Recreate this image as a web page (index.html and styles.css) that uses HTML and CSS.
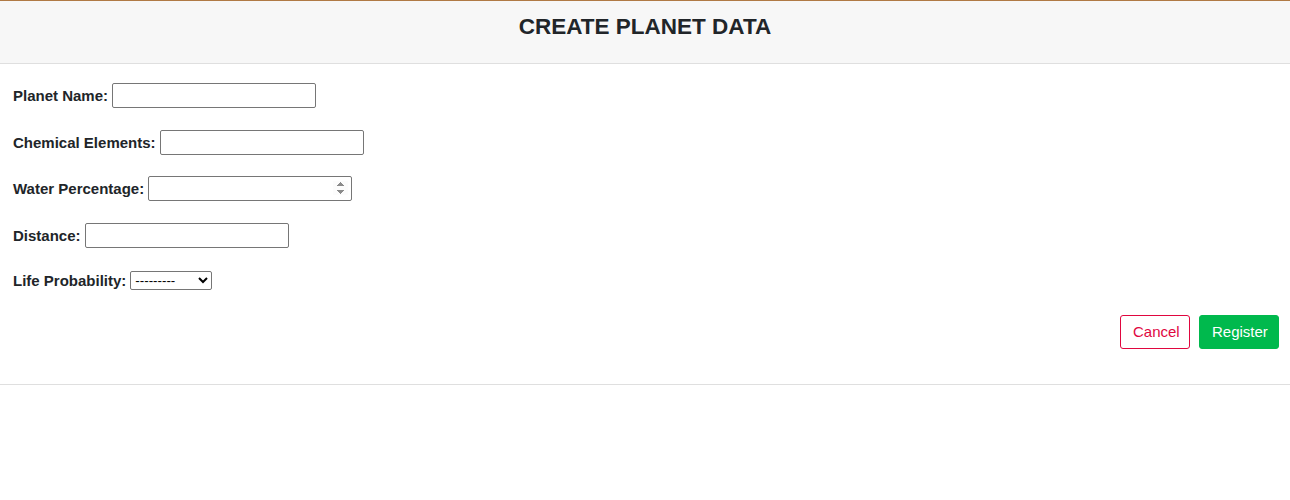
FILE: index.html
```html
<!DOCTYPE html>
<html lang="en">
<head>
<meta charset="utf-8">
<title>Create Planet Data</title>
<link rel="stylesheet" href="styles.css">
</head>
<body>
<div class="card">
  <div class="card-header">
    <h5 class="card-title">CREATE PLANET DATA</h5>
  </div>
  <form class="card-body">
    <div class="field field-first">
      <label for="name">Planet Name:</label>
      <input class="text-input" type="text" id="name">
    </div>
    <div class="field">
      <label for="elements">Chemical Elements:</label>
      <input class="text-input" type="text" id="elements">
    </div>
    <div class="field">
      <label for="water">Water Percentage:</label>
      <input class="text-input number-input" type="number" id="water">
    </div>
    <div class="field">
      <label for="distance">Distance:</label>
      <input class="text-input" type="text" id="distance">
    </div>
    <div class="field field-select">
      <label for="life">Life Probability:</label>
      <select class="select-input" id="life">
        <option>---------</option>
        <option>Low</option>
        <option>Medium</option>
        <option>High</option>
      </select>
    </div>
    <div class="actions">
      <button type="button" class="btn btn-cancel">Cancel</button>
      <button type="submit" class="btn btn-register">Register</button>
    </div>
  </form>
</div>
</body>
</html>
```
FILE: styles.css
```css
html, body {
  margin: 0;
  padding: 0;
  background: #ffffff;
}

body {
  font-family: "Liberation Sans", Arial, sans-serif;
  color: #212529;
}

.card {
  border-top: 1px solid #b07a45;
  border-bottom: 1px solid #dfdfdf;
}

.card-header {
  background: #f7f7f7;
  border-bottom: 1px solid #dfdfdf;
  height: 63px;
  box-sizing: border-box;
  padding-top: 12px;
  text-align: center;
}

.card-title {
  margin: 0;
  font-size: 22.5px;
  line-height: 27px;
  font-weight: bold;
  color: #212529;
}

.card-body {
  display: flex;
  flex-direction: column;
  padding: 19px 11px 35px 12px;
}

.field {
  display: flex;
  align-items: center;
  gap: 4px;
  height: 25px;
  margin-top: 21.5px;
}

.field-first {
  margin-top: 0;
}

.field-select {
  height: 19px;
  margin-top: 23px;
}

.field label {
  font-size: 15px;
  font-weight: bold;
  padding-left: 1px;
}

.text-input {
  box-sizing: border-box;
  width: 204px;
  height: 25px;
  border: 1px solid #767676;
  border-radius: 2px;
  padding: 1px 3px;
  font-family: "Liberation Sans", Arial, sans-serif;
  font-size: 13.33px;
  background: #fff;
}

.number-input::-webkit-inner-spin-button {
  opacity: 1;
}

.select-input {
  box-sizing: border-box;
  width: 82px;
  height: 19px;
  border: 1px solid #767676;
  border-radius: 2px;
  font-family: "Liberation Sans", Arial, sans-serif;
  font-size: 13.33px;
  background: #fff;
  color: #000;
}

.actions {
  display: flex;
  justify-content: flex-end;
  gap: 9px;
  margin-top: 25px;
}

.btn {
  box-sizing: border-box;
  height: 34px;
  padding: 0 12px;
  border-radius: 3px;
  font-family: "Liberation Sans", Arial, sans-serif;
  font-size: 15px;
  cursor: pointer;
}

.btn-cancel {
  width: 70px;
  background: #ffffff;
  border: 1px solid #e0073f;
  color: #e0073f;
}

.btn-register {
  width: 80px;
  background: #00b94d;
  border: 1px solid #00b94d;
  color: #ffffff;
}
```
